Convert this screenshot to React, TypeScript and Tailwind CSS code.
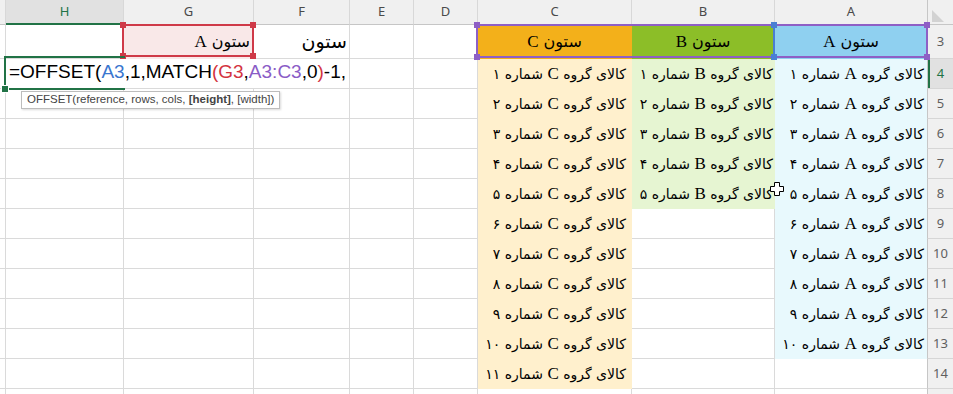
import React from "react";

const FA = "۰۱۲۳۴۵۶۷۸۹";
const fa = (n: number) =>
  String(n)
    .split("")
    .map((d) => FA[Number(d)])
    .join("");

type Col = { key: string; w: string; pr: string };

const cols: Col[] = [
  { key: "", w: "w-[6px]", pr: "" },
  { key: "H", w: "w-[118px]", pr: "" },
  { key: "G", w: "w-[130px]", pr: "pr-[3px]" },
  { key: "F", w: "w-[96px]", pr: "pr-[2px]" },
  { key: "E", w: "w-[64px]", pr: "" },
  { key: "D", w: "w-[64px]", pr: "" },
  { key: "C", w: "w-[154px]", pr: "pr-[5px]" },
  { key: "B", w: "w-[143px]", pr: "pr-[1px]" },
  { key: "A", w: "w-[152px]", pr: "pr-[3px]" },
];

const counts: Record<string, number> = { A: 10, B: 5, C: 11 };
const dataFill: Record<string, string> = {
  A: "bg-[#e8f9fd]",
  B: "bg-[#e6f5d2]",
  C: "bg-[#fff0cd]",
};
const headFill: Record<string, string> = {
  A: "bg-[#8fd0f0]",
  B: "bg-[#8cbe28]",
  C: "bg-[#f3b01a]",
};

const latin = "font-['Liberation_Serif',serif] text-[17px]";
const arabic = "font-['DejaVu_Sans',sans-serif] text-[14px]";

function cellInfo(col: string, row: number): { fill?: string; text?: React.ReactNode; center?: boolean } {
  if (row === 3) {
    if (headFill[col])
      return {
        fill: headFill[col],
        center: true,
        text: (
          <>
            <span className="font-['DejaVu_Sans',sans-serif] text-[16px]">ستون </span>
            <span className={latin}>{col}</span>
          </>
        ),
      };
    if (col === "G")
      return {
        fill: "bg-[#f9e8e8]",
        text: (
          <>
            <span className="font-['DejaVu_Sans',sans-serif] text-[16px]">ستون </span>
            <span className={latin}>A</span>
          </>
        ),
      };
    if (col === "F")
      return { text: <span className="font-['DejaVu_Sans',sans-serif] text-[19px]">ستون</span> };
    return {};
  }
  const n = row - 3;
  if (counts[col] && n <= counts[col]) {
    return {
      fill: dataFill[col],
      text: (
        <>
          <span className={arabic}>کالای گروه </span>
          <span className={latin}>{col}</span>
          <span className={arabic}> شماره {fa(n)}</span>
        </>
      ),
    };
  }
  return {};
}

const Cell = ({ col, row }: { col: Col; row: number }) => {
  const info = cellInfo(col.key, row);
  const border = col.key === "A" ? "border-b" : "border-r border-b";
  return (
    <div
      className={`${col.w} ${border} shrink-0 flex items-center overflow-hidden whitespace-nowrap text-black ${
        info.fill ? `${info.fill} border-transparent` : "border-[#dadada]"
      } ${info.center ? "justify-center" : `justify-start ${col.pr}`}`}
      dir="rtl"
    >
      {info.text && <span>{info.text}</span>}
    </div>
  );
};

const Formula = () => (
  <div className="w-[344px] shrink-0 border-r border-b border-[#dadada] flex items-center pl-[3px] pb-[3px] whitespace-nowrap font-['Liberation_Sans',Arial,sans-serif] text-[19px] text-black">
    <span>=OFFSET(</span>
    <span className="text-[#3a76cf]">A3</span>
    <span>,1,MATCH</span>
    <span className="text-[#d3343f]">(G3</span>
    <span>,</span>
    <span className="text-[#8a5cc6]">A3:C3</span>
    <span>,0</span>
    <span className="text-[#d3343f]">)</span>
    <span>-1,</span>
  </div>
);

const RowHead = ({ n, active }: { n?: number; active?: boolean }) => (
  <div
    className={`w-[26px] shrink-0 border-l border-b border-l-[#c6c6c6] border-b-[#d6d6d6] flex items-center justify-center font-['Noto_Sans',sans-serif] text-[13px] ${
      active
        ? "bg-[#e1e1e1] text-[#217346] shadow-[inset_2px_0_0_#217346]"
        : "bg-[#f0f0f0] text-[#5f5f5f]"
    }`}
  >
    {n}
  </div>
);

const Corner = ({ s, c }: { s: string; c: string }) => (
  <div className={`absolute w-[6px] h-[6px] ${c} ${s}`} />
);

export default function App() {
  const rows = [4, 5, 6, 7, 8, 9, 10, 11, 12, 13, 14, 15];
  return (
    <div className="relative w-[953px] h-[394px] overflow-hidden bg-white">
      {/* column headers */}
      <div className="flex h-[25px]">
        {cols.map((c) => (
          <div
            key={c.key || "I"}
            className={`${c.w} shrink-0 border-b ${c.key === "A" ? "" : "border-r border-r-[#d8d8d8]"} flex items-center justify-center font-['Noto_Sans',sans-serif] text-[13px] ${
              c.key === "H"
                ? "bg-[#e1e1e1] text-[#217346] border-b-[#217346] shadow-[inset_0_-1px_0_#217346]"
                : "bg-[#f0f0f0] text-[#4a4a4a] border-b-[#c6c6c6]"
            }`}
          >
            {c.key}
          </div>
        ))}
        <div className="w-[26px] shrink-0 border-l border-b border-[#c6c6c6] bg-[#f0f0f0] flex items-end pl-[4px] pb-[2px]">
          <svg width="12" height="12" viewBox="0 0 12 12">
            <path d="M0 0 L0 12 L12 12 Z" fill="#d2d2d2" />
          </svg>
        </div>
      </div>

      {/* row 3 */}
      <div className="flex h-[34px]">
        {cols.map((c) => (
          <Cell key={c.key || "I"} col={c} row={3} />
        ))}
        <RowHead n={3} />
      </div>

      {rows.map((r) => (
        <div key={r} className="flex h-[30px]">
          {r === 4 ? (
            <>
              <Cell col={cols[0]} row={r} />
              <Formula />
              {cols.slice(4).map((c) => (
                <Cell key={c.key} col={c} row={r} />
              ))}
            </>
          ) : (
            cols.map((c) => <Cell key={c.key || "I"} col={c} row={r} />)
          )}
          <RowHead n={r < 15 ? r : undefined} active={r === 4} />
        </div>
      ))}

      {/* reference highlight: G3 */}
      <div className="absolute left-[122px] top-[24px] w-[132px] h-[33px] border-2 border-[#cf3a48]">
        <Corner c="bg-[#cf3a48]" s="-left-[4px] -top-[4px]" />
        <Corner c="bg-[#cf3a48]" s="-right-[4px] -top-[4px]" />
        <Corner c="bg-[#cf3a48]" s="-left-[4px] -bottom-[4px]" />
        <Corner c="bg-[#cf3a48]" s="-right-[4px] -bottom-[4px]" />
      </div>

      {/* reference highlight: A3:C3 */}
      <div className="absolute left-[476px] top-[24px] w-[452px] h-[34px] border-2 border-[#8e5fc5]">
        <Corner c="bg-[#8e5fc5]" s="-left-[4px] -top-[4px]" />
        <Corner c="bg-[#8e5fc5]" s="-right-[4px] -top-[4px]" />
        <Corner c="bg-[#8e5fc5]" s="-left-[4px] -bottom-[4px]" />
        <Corner c="bg-[#8e5fc5]" s="-right-[4px] -bottom-[4px]" />
      </div>
      {/* reference highlight: A3 left edge */}
      <div className="absolute left-[773px] top-[25px] w-[2px] h-[32px] bg-[#4a7fd4]" />
      <Corner c="bg-[#4a7fd4]" s="left-[771px] top-[22px]" />
      <Corner c="bg-[#4a7fd4]" s="left-[771px] top-[54px]" />

      {/* active cell H4 */}
      <div className="absolute left-[4px] top-[56px] w-[121px] h-[34px] border-l-2 border-t-2 border-b-2 border-[#217346]" />
      <div className="absolute left-[2px] top-[86px] w-[6px] h-[6px] bg-[#217346] outline outline-1 outline-white" />

      {/* function tooltip */}
      <div className="absolute left-[21px] top-[91px] h-[18px] px-[5px] flex items-center bg-white border border-[#bdbdbd] shadow-[1px_1px_2px_rgba(0,0,0,0.15)] whitespace-pre font-['Liberation_Sans',Arial,sans-serif] text-[11.5px] text-[#444]">
        <span>OFFSET(reference, rows, cols, </span>
        <b className="font-bold">[height]</b>
        <span>, [width])</span>
      </div>

      {/* mouse cursor */}
      <svg className="absolute left-[770px] top-[182px]" width="14" height="14" viewBox="0 0 14 14">
        <path
          d="M4.5 0.5 H9.5 V4.5 H13.5 V9.5 H9.5 V13.5 H4.5 V9.5 H0.5 V4.5 H4.5 Z"
          fill="#fff"
          stroke="#000"
          strokeWidth="1"
        />
      </svg>
    </div>
  );
}
